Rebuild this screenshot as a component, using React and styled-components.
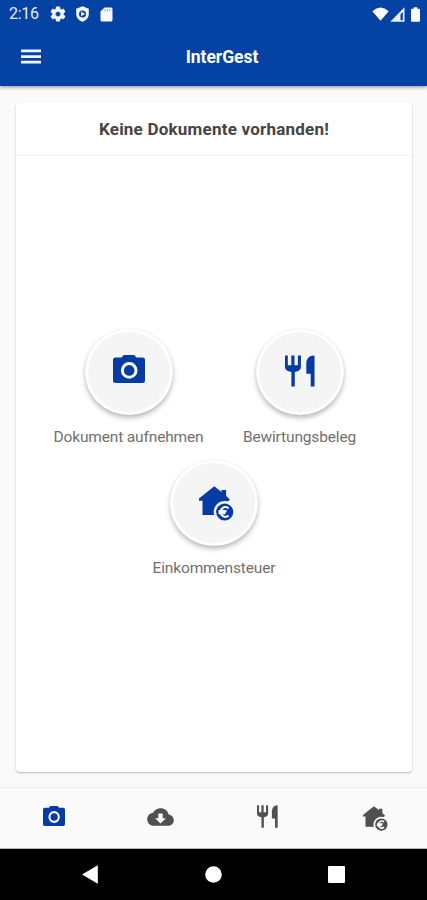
import React from "react";
import styled, { createGlobalStyle } from "styled-components";

const GlobalStyle = createGlobalStyle`
  * { box-sizing: border-box; }
  body { margin: 0; background: #fafafa; font-family: Roboto, "Liberation Sans", sans-serif; }
  svg { display: block; flex: none; }
`;

const Screen = styled.div`
  width: 427px;
  height: 900px;
  display: flex;
  flex-direction: column;
  background: #fafafa;
  overflow: hidden;
`;

const Header = styled.header`
  height: 86px;
  flex: none;
  background: #0442a4;
  color: #fff;
  box-shadow: 0 1px 4px rgba(0, 0, 0, 0.45);
`;

const StatusBar = styled.div`
  height: 28px;
  display: flex;
  align-items: center;
  justify-content: space-between;
  padding: 0 7px 0 9px;
`;

const StatusGroup = styled.div`
  display: flex;
  align-items: center;
  gap: ${(p) => p.$gap}px;
`;

const Clock = styled.span`
  width: 31px;
  font-size: 16px;
  line-height: 28px;
  letter-spacing: -0.3px;
  white-space: nowrap;
  color: #e3edff;
`;

const AppBar = styled.div`
  height: 58px;
  display: grid;
  grid-template-columns: 62px 1fr 62px;
  align-items: center;
`;

const MenuButton = styled.button`
  height: 57px;
  padding: 0 0 1px 21px;
  border: 0;
  background: none;
`;

const Title = styled.h1`
  margin: 0;
  padding-left: 17px;
  font-size: 17.5px;
  line-height: 58px;
  font-weight: 700;
  text-align: center;
  letter-spacing: -0.05px;
`;

const Main = styled.main`
  flex: 1;
  padding: 16px 15px 15px 16px;
  display: flex;
`;

const Card = styled.section`
  flex: 1;
  display: flex;
  flex-direction: column;
  background: #fff;
  border-radius: 4px;
  box-shadow: 0 1px 2px rgba(0, 0, 0, 0.27);
`;

const CardTitle = styled.h2`
  height: 54px;
  margin: 0;
  border-bottom: 1px solid #f3f3f3;
  font-size: 17px;
  line-height: 54px;
  font-weight: 700;
  color: #454545;
  text-align: center;
  letter-spacing: 0.22px;
`;

const Actions = styled.div`
  display: grid;
  grid-template-columns: 171px 171px;
  justify-content: center;
  padding-top: 173px;
`;

const Action = styled.div`
  height: 131px;
  display: flex;
  flex-direction: column;
  align-items: center;
  grid-column: ${(p) => (p.$wide ? "1 / -1" : "auto")};
`;

const RoundButton = styled.button`
  width: 88px;
  height: 86px;
  padding: 0 0 ${(p) => p.$lift}px ${(p) => p.$shift}px;
  display: flex;
  align-items: center;
  justify-content: center;
  border: 3px solid #fff;
  border-radius: 50%;
  background: #f5f5f5;
  box-shadow: 0 3px 5px rgba(0, 0, 0, 0.27), 0 0 2px rgba(0, 0, 0, 0.06);
`;

const Label = styled.span`
  margin-top: 11px;
  font-size: 15.5px;
  line-height: 22px;
  letter-spacing: -0.15px;
  white-space: nowrap;
  color: #707070;
`;

const Tabs = styled.nav`
  height: 62px;
  flex: none;
  display: grid;
  grid-template-columns: repeat(4, 1fr);
  border-top: 1px solid #efefef;
  border-bottom: 1px solid #b5b5b5;
`;

const Tab = styled.button`
  display: flex;
  align-items: center;
  justify-content: center;
  padding: 0 0 ${(p) => p.$lift}px ${(p) => p.$shift}px;
  border: 0;
  background: none;
`;

const SystemNav = styled.div`
  height: 51px;
  flex: none;
  display: flex;
  align-items: center;
  justify-content: space-between;
  padding: 0 82px;
  background: #000;
`;

const BLUE = "#053ba5";
const GREY = "#505050";

const Gear = () => (
  <svg width="16" height="16" viewBox="1.5 1.5 21 21" fill="#f4f7ff">
    <path stroke="#f4f7ff" strokeWidth=".6" fillRule="evenodd" d="M19.14 12.94c.04-.3.06-.61.06-.94s-.02-.64-.07-.94l2.03-1.58a.5.5 0 0 0 .12-.61l-1.92-3.32a.49.49 0 0 0-.59-.22l-2.39.96a7 7 0 0 0-1.62-.94l-.36-2.54A.48.48 0 0 0 13.92 2.4h-3.84a.47.47 0 0 0-.47.41l-.36 2.54c-.59.24-1.13.57-1.62.94l-2.39-.96a.47.47 0 0 0-.59.22L2.74 8.87a.47.47 0 0 0 .12.61l2.03 1.58a6 6 0 0 0 0 1.88l-2.03 1.58a.5.5 0 0 0-.12.61l1.92 3.32c.12.22.37.29.59.22l2.39-.96c.5.38 1.03.7 1.62.94l.36 2.54c.05.24.24.41.48.41h3.84c.24 0 .44-.17.47-.41l.36-2.54c.59-.24 1.13-.56 1.62-.94l2.39.96c.22.08.47 0 .59-.22l1.92-3.32a.47.47 0 0 0-.12-.61zM12 15.4a3.4 3.4 0 1 1 0-6.8 3.4 3.4 0 0 1 0 6.8z" />
  </svg>
);

const Shield = () => (
  <svg width="13" height="16" viewBox="0 0 13 16" fill="#f4f7ff">
    <path fillRule="evenodd" d="M6.5.2 12.8 2.7v5c0 3.8-2.5 6.6-6.3 8.1C2.7 14.3.2 11.5.2 7.7v-5zM6.5 4.4a3.5 3.5 0 1 0 0 7 3.5 3.5 0 0 0 0-7z" />
    <path d="m5.1 5.6 4 2.3-4 2.3z" />
  </svg>
);

const SdCard = () => (
  <svg width="13" height="15" viewBox="0 0 13 15">
    <path fill="#f7f9ff" d="M4.5.5H11q1.5 0 1.5 1.500v11q0 1.5-1.5 1.500H2Q.5 14.500.5 13V4.5z" />
    <path stroke="#8fa9d8" strokeWidth="1" d="M5 2v2.500M7.500 2v2.500M10 2v2.500" />
  </svg>
);

const Wifi = () => (
  <svg width="17" height="14" viewBox="0 0 17 14" fill="#fff">
    <path d="M.3 4.200Q8.500-3.200 16.700 4.200L8.500 13.800z" />
  </svg>
);

const Signal = () => (
  <svg width="15" height="15" viewBox="0 0 15 15">
    <path fill="#e9f0ff" fillRule="evenodd" d="M14.500.3v14.400H.3zM12.800 5 10.500 7.300v6h2.300z" />
  </svg>
);

const Battery = () => (
  <svg width="9" height="15" viewBox="0 0 9 15" fill="#fff">
    <path d="M2.700.3h3.600v1.400H8q1 0 1 1v11q0 1-1 1H1q-1 0-1-1v-11q0-1 1-1h1.700z" />
  </svg>
);

const MenuIcon = () => (
  <svg width="20" height="15" viewBox="0 0 20 15" fill="#f1f5ff">
    <path d="M0 .5h20v2.700H0zM0 6.200h20v2.700H0zM0 11.700h20v2.700H0z" />
  </svg>
);

const Camera = ({ width, height, color, surface }) => (
  <svg width={width} height={height} viewBox="0 0 32 28" preserveAspectRatio="none" fill={color}>
    <path d="M11.500 0h9q1 0 1.500.7L23.400 2.500H29.500Q32 2.500 32 5v20.500q0 2.500-2.500 2.500h-27Q0 28 0 25.500V5Q0 2.500 2.500 2.500h6.100L10 .7Q10.500 0 11.500 0z" />
    <circle cx="16.200" cy="15.400" r="6.800" fill="none" stroke={surface} strokeWidth="3" />
  </svg>
);

const Cutlery = ({ width, height, color }) => (
  <svg width={width} height={height} viewBox="0 0 30 32" preserveAspectRatio="none" fill={color}>
    <path d="M0 .5h2.800v9.700h3.500V.5h3.200v9.700h3.400V.5h3v11.300q0 3.200-3.200 4.400l-2.900.8v14.500H6.400V17l-3-.8Q0 15 0 11.800z" />
    <path d="M29.500.5v31h-3.800V18.700h-4.400V8q0-4.200 3.900-6.700Q26.700.5 29.500.5z" />
  </svg>
);

const HouseEuro = ({ width, height, color, surface }) => (
  <svg width={width} height={height} viewBox="0 0 35 35" fill={color}>
    <path d="M15.300.2 22.500 6V4h4.600v6l3.700 3.200-1.600 2.200h-1.600V29H3.500V14.700H0v-2.200z" />
    <circle cx="25.700" cy="26" r="11" fill={surface} />
    <circle cx="25.700" cy="26" r="8.600" />
    <path fill="none" stroke={surface} strokeWidth="2.200" d="M29.500 22.300a4.800 4.800 0 1 0 0 7.400M19.500 25.100h8M19.500 27.200h7" />
  </svg>
);

const CloudDownload = () => (
  <svg width="27" height="18" viewBox="0 0 27 18" fill={GREY}>
    <path fillRule="evenodd" d="M21.700 6.500C20.900 2.700 17.600.2 13.500.2c-3.200 0-6 1.700-7.400 4.500C2.700 5.100.2 7.900.2 11.200c0 3.700 3 6.600 6.800 6.600h14.300c3.100 0 5.500-2.400 5.500-5.500 0-3-2.200-5.400-5.100-5.800zM13.500 15.600 8 10.300h3.300V5.600h4.400v4.700H19z" />
  </svg>
);

const actions = [
  { label: "Dokument aufnehmen", lift: 6, shift: 0, icon: <Camera width={32} height={28} color={BLUE} surface="#fafafa" /> },
  { label: "Bewirtungsbeleg", lift: 3, shift: 0, icon: <Cutlery width={30} height={32} color={BLUE} /> },
  {
    label: "Einkommensteuer",
    wide: true,
    lift: 0,
    shift: 4,
    icon: <HouseEuro width={35} height={35} color={BLUE} surface="#f5f5f5" />,
  },
];

const tabs = [
  { name: "Dokument", lift: 4, shift: 2, icon: <Camera width={22} height={20} color={BLUE} surface="#fafafa" /> },
  { name: "Download", lift: 2, shift: 0, icon: <CloudDownload /> },
  { name: "Bewirtung", lift: 3, shift: 2, icon: <Cutlery width={21} height={23} color={GREY} /> },
  { name: "Steuer", lift: 0, shift: 3, icon: <HouseEuro width={25} height={25} color={GREY} surface="#fafafa" /> },
];

export default function App() {
  return (
    <Screen>
      <GlobalStyle />
      <Header>
        <StatusBar>
          <StatusGroup $gap={11}>
            <StatusGroup $gap={10}>
              <Clock>2:16</Clock>
              <Gear />
              <Shield />
            </StatusGroup>
            <SdCard />
          </StatusGroup>
          <StatusGroup $gap={6}>
            <StatusGroup $gap={1}>
              <Wifi />
              <Signal />
            </StatusGroup>
            <Battery />
          </StatusGroup>
        </StatusBar>
        <AppBar>
          <MenuButton aria-label="Menü"><MenuIcon /></MenuButton>
          <Title>InterGest</Title>
        </AppBar>
      </Header>
      <Main>
        <Card>
          <CardTitle>Keine Dokumente vorhanden!</CardTitle>
          <Actions>
            {actions.map((a) => (
              <Action key={a.label} $wide={a.wide}>
                <RoundButton aria-label={a.label} $lift={a.lift} $shift={a.shift}>{a.icon}</RoundButton>
                <Label>{a.label}</Label>
              </Action>
            ))}
          </Actions>
        </Card>
      </Main>
      <Tabs>
        {tabs.map((t) => (
          <Tab key={t.name} aria-label={t.name} $lift={t.lift} $shift={t.shift}>{t.icon}</Tab>
        ))}
      </Tabs>
      <SystemNav>
        <svg width="16" height="19" viewBox="0 0 16 19" fill="#fff"><path d="M15.800.3v18.400L0 9.500z" /></svg>
        <svg width="17" height="17" viewBox="0 0 17 17" fill="#fff"><circle cx="8.500" cy="8.500" r="8.300" /></svg>
        <svg width="17" height="17" viewBox="0 0 17 17" fill="#fff"><rect width="17" height="17" rx="1" /></svg>
      </SystemNav>
    </Screen>
  );
}
